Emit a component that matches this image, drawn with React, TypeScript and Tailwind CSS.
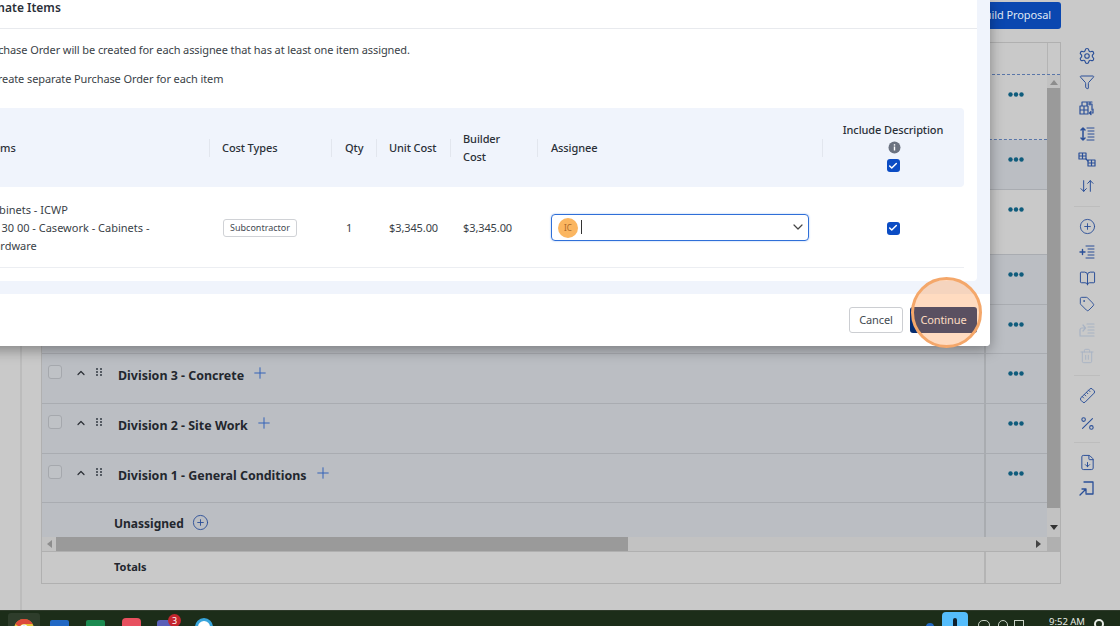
import React from "react";
import { Settings, Funnel, ArrowDownUp, CirclePlus, BookOpen, Tag, Trash2, Ruler, Percent, FileDown, ChevronDown, ChevronUp, Plus, Check } from "lucide-react";

const ink = "#2a4f98";

function Dots() {
  return (
    <svg width="16" height="5" viewBox="0 0 16 5">
      <circle cx="2.5" cy="2.5" r="2.2" fill="#0f5c7c" />
      <circle cx="8" cy="2.5" r="2.2" fill="#0f5c7c" />
      <circle cx="13.5" cy="2.5" r="2.2" fill="#0f5c7c" />
    </svg>
  );
}

function Grip() {
  return (
    <svg width="6" height="10" viewBox="0 0 6 10" fill="#555b63">
      {[1, 4, 7].map((y) => (
        <React.Fragment key={y}>
          <rect x="0" y={y - 1} width="2" height="2" />
          <rect x="4" y={y - 1} width="2" height="2" />
        </React.Fragment>
      ))}
    </svg>
  );
}

function Box() {
  return (
    <span className="flex h-[13px] w-[13px] items-center justify-center rounded-[3px] bg-[#0b4cc4]">
      <Check size={10} strokeWidth={3.5} color="white" />
    </span>
  );
}

function TableRow({ h, bg, dashed, children }: { h: number; bg: string; dashed?: boolean; children?: React.ReactNode }) {
  return (
    <div
      className={"flex border-b " + (dashed ? "border-dashed border-b-[#5a76a8]" : "border-[#a9acb1]")}
      style={{ height: h, backgroundColor: bg }}
    >
      <div className="min-w-0 flex-1">{children}</div>
      <div className="flex w-[63px] shrink-0 items-start justify-center border-l-2 border-[#a9acb0] pr-[2px] pt-[17px]">
        <Dots />
      </div>
    </div>
  );
}

function Division({ title }: { title: string }) {
  return (
    <div className="flex items-start pl-[6px] pt-[11px]">
      <span className="h-[14px] w-[14px] rounded-[3px] border border-[#a5a8ad] bg-[#bfc2c6]" />
      <ChevronUp size={12} strokeWidth={2.4} color="#2b2f36" className="ml-[13px] mt-[2px]" />
      <span className="ml-[9px] mt-[3px]"><Grip /></span>
      <span className="ml-[16px] mt-[1px] text-[12.45px] font-bold leading-[20px] text-[#23272e]">{title}</span>
      <Plus size={18} strokeWidth={1.3} color="#2f62b8" className="-mt-[1px] ml-[7px]" />
    </div>
  );
}

function SideIcon({ children }: { children: React.ReactNode }) {
  return <div className="flex h-[26px] items-center justify-center">{children}</div>;
}

function Sep({ h = 14 }: { h?: number }) {
  return (
    <div className="flex items-center justify-center" style={{ height: h }}>
      <div className="h-px w-[26px] bg-[#bdbdbd]" />
    </div>
  );
}

function Svg({ children, color = ink }: { children: React.ReactNode; color?: string }) {
  return (
    <svg width="18" height="18" viewBox="0 0 18 18" fill="none" stroke={color} strokeWidth="1.2" strokeLinecap="round" strokeLinejoin="round">
      {children}
    </svg>
  );
}

function Sidebar() {
  return (
    <div className="w-[59px] shrink-0 pr-[7px] pt-[43px]">
      <SideIcon><Settings size={18} strokeWidth={1.5} color={ink} /></SideIcon>
      <SideIcon><Funnel size={16} strokeWidth={1.5} color={ink} /></SideIcon>
      <SideIcon>
        <Svg>
          <path d="M2 7h8v8H2zM2 11h8M6 7v8M4 7V3h5v4M9 5h5v6M12 3v3M9 3h5" />
          <path d="M15 10v4h-3M13 12.5 11.5 14l1.5 1.5" />
        </Svg>
      </SideIcon>
      <SideIcon>
        <Svg>
          <path d="M5 3v12M3 5l2-2 2 2M3 13l2 2 2-2" strokeWidth="1.5" />
          <path d="M9 3h7M10 6h6M10 9h6M10 12h6M9 15h7" strokeWidth="1" />
        </Svg>
      </SideIcon>
      <SideIcon>
        <Svg>
          <path d="M1 2h7v6H1zM1 5h7M4.500 2v6M10 9h7v6h-7zM10 12h7M13.500 9v6" />
          <path d="M8 8l2 2" />
        </Svg>
      </SideIcon>
      <SideIcon><ArrowDownUp size={16} strokeWidth={1.5} color={ink} /></SideIcon>
      <Sep />
      <SideIcon><CirclePlus size={17} strokeWidth={1.3} color={ink} /></SideIcon>
      <SideIcon>
        <Svg>
          <path d="M2 9h5M4.500 6.500v5" strokeWidth="1.4" />
          <path d="M8 3h8M10 6h6M10 9h6M10 12h6M8 15h8" strokeWidth="1" />
        </Svg>
      </SideIcon>
      <SideIcon><BookOpen size={17} strokeWidth={1.4} color={ink} /></SideIcon>
      <SideIcon><Tag size={16} strokeWidth={1.4} color={ink} /></SideIcon>
      <SideIcon>
        <Svg color="#a8b3c4">
          <path d="M2 14V9a2 2 0 0 1 2-2h3M5 4l2.500 3L5 10M9 3h7M10 6h6M10 9h6M10 12h6M2 15h14" />
        </Svg>
      </SideIcon>
      <SideIcon><Trash2 size={16} strokeWidth={1.4} color="#a8b3c4" /></SideIcon>
      <Sep h={13} />
      <SideIcon><Ruler size={17} strokeWidth={1.4} color={ink} className="-scale-x-100" /></SideIcon>
      <div className="h-[2px]" />
      <SideIcon><Percent size={17} strokeWidth={1.5} color={ink} /></SideIcon>
      <Sep h={13} />
      <SideIcon><FileDown size={17} strokeWidth={1.4} color={ink} /></SideIcon>
      <SideIcon>
        <Svg>
          <path d="M6 3h9v12H8" strokeWidth="1.3" />
          <path d="M2 16l6-6M4 10h4v4" strokeWidth="1.3" />
        </Svg>
      </SideIcon>
    </div>
  );
}

function Background() {
  return (
    <div className="flex h-[610px] bg-[#c9c9c9]">
      <div className="w-[22px] shrink-0 border-r-2 border-[#bcbcbc]" />
      <div className="flex min-w-0 flex-1 flex-col pl-[19px]">
        <div className="flex h-[42px] shrink-0 justify-end pt-[2px]">
          <button className="h-[27px] whitespace-nowrap rounded-[3px] bg-[#0a47b0] px-[10px] text-[11px] tracking-[-0.1px] text-[#dfe6f3]">Build Proposal</button>
        </div>
        <div className="flex h-[542px] flex-col border border-[#b0b0b0]">
          <div className="flex h-[32px] shrink-0 border-b border-dashed border-b-[#5a76a8]">
            <div className="flex-1" />
            <div className="w-[13px] border-l border-[#b4b4b4]" />
          </div>
          <div className="flex h-[462px] shrink-0">
            <div className="min-w-0 flex-1">
              <TableRow h={65} bg="#c9c9c9" dashed />
              <TableRow h={50} bg="#bbbec3" />
              <TableRow h={65} bg="#c9c9c9" />
              <TableRow h={50} bg="#bbbec3" />
              <TableRow h={49} bg="#bbbec3"><div /></TableRow>
              <TableRow h={50} bg="#bbbec3"><Division title="Division 3 - Concrete" /></TableRow>
              <TableRow h={50} bg="#bbbec3"><Division title="Division 2 - Site Work" /></TableRow>
              <TableRow h={49} bg="#bbbec3"><Division title="Division 1 - General Conditions" /></TableRow>
              <div className="flex h-[34px] bg-[#bbbec3]">
                <div className="flex min-w-0 flex-1 items-center pl-[72px] pt-[7px]">
                  <span className="text-[12px] font-bold text-[#23272e]">Unassigned</span>
                  <CirclePlus size={17} strokeWidth={1.3} color={ink} className="-mt-[2px] ml-[8px]" />
                </div>
                <div className="w-[63px] shrink-0 border-l-2 border-[#a9acb0]" />
              </div>
            </div>
            <div className="flex w-[13px] shrink-0 flex-col items-center bg-[#c2c2c2]">
              <div className="mt-[5px] h-0 w-0 border-x-[4px] border-b-[5px] border-x-transparent border-b-[#8d8d8d]" />
              <div className="mt-[3px] h-[420px] w-full bg-[#9a9a9a]" />
              <div className="mt-[17px] h-0 w-0 border-x-[4px] border-t-[5px] border-x-transparent border-t-[#333]" />
            </div>
          </div>
          <div className="flex h-[15px] shrink-0 items-center border-b border-[#b0b0b0] bg-[#c2c2c2]">
            <div className="ml-[5px] h-0 w-0 border-y-[4px] border-r-[5px] border-y-transparent border-r-[#8d8d8d]" />
            <div className="ml-[4px] h-full w-[572px] bg-[#9a9a9a]" />
            <div className="ml-[408px] h-0 w-0 border-y-[4px] border-l-[5px] border-y-transparent border-l-[#444]" />
            <div className="ml-auto h-full w-[13px] bg-[#b0b0b0]" />
          </div>
          <div className="flex min-h-0 flex-1 bg-[#c9c9c9]">
            <div className="flex flex-1 items-center pl-[72px] text-[11px] font-bold text-[#23272e]">Totals</div>
            <div className="w-[76px] border-l-2 border-[#b4b4b4]" />
          </div>
        </div>
      </div>
      <Sidebar />
    </div>
  );
}

function Sep2() {
  return <span className="absolute left-0 top-1/2 h-[18px] w-px -translate-y-1/2 bg-[#e2e6ee]" />;
}

function Info() {
  return (
    <svg width="13" height="13" viewBox="0 0 13 13">
      <circle cx="6.5" cy="6.5" r="6" fill="#6b7280" />
      <rect x="5.800" y="5.500" width="1.400" height="4" fill="white" />
      <rect x="5.800" y="3.200" width="1.400" height="1.400" fill="white" />
    </svg>
  );
}

function Modal() {
  return (
    <div className="absolute -left-[60px] top-0 flex h-[346px] w-[1050px] flex-col overflow-hidden rounded-br-[4px] bg-[#f0f4fc] text-[11px] tracking-[-0.1px] shadow-[0_4px_14px_rgba(0,0,0,0.35)]">
      <div className="h-[281px] w-[1037px] shrink-0 rounded-br-[4px] bg-white">
        <div className="h-[29px] border-b border-[#e8eaee] pl-[19px] pt-[1px] text-[12px] font-semibold leading-[14px] tracking-normal text-[#2b3038]">Coordinate Items</div>
        <div className="flex h-[79px] flex-col pl-[31px] pt-[13px] leading-[16px] text-[#3a3f47]">
          <span>A Purchase Order will be created for each assignee that has at least one item assigned.</span>
          <span className="mt-[13px] pl-[20px]">Create separate Purchase Order for each item</span>
        </div>
        <div className="ml-[2px] mr-[13px] flex h-[79px] rounded-r-[4px] bg-[#f0f4fc] font-medium leading-[18px] text-[#2b3038]">
          <div className="flex w-[267px] items-center pl-[44px]">Items</div>
          <div className="relative flex w-[122px] items-center pl-[13px]"><Sep2 />Cost Types</div>
          <div className="relative flex w-[45px] items-center pl-[14px]"><Sep2 />Qty</div>
          <div className="relative flex w-[74px] items-center pl-[13px]"><Sep2 />Unit Cost</div>
          <div className="relative flex w-[87px] items-center pl-[13px]"><Sep2 /><span className="w-[40px]">Builder Cost</span></div>
          <div className="relative flex w-[285px] items-center pl-[14px]"><Sep2 />Assignee</div>
          <div className="relative flex w-[142px] flex-col items-center justify-center"><Sep2 />
            <span>Include Description</span>
            <span className="flex h-[18px] items-center pl-[3px]"><Info /></span>
            <span className="flex h-[18px] items-center"><Box /></span>
          </div>
        </div>
        <div className="ml-[2px] mr-[13px] flex h-[81px] border-b border-[#eceef2] pt-[2px] leading-[18px] text-[#3a3f47]">
          <div className="flex w-[267px] flex-col justify-center pl-[44px] pr-[36px] tracking-normal">
            <span>Cabinets - ICWP</span>
            <span>06 30 00 - Casework - Cabinets - Hardware</span>
          </div>
          <div className="flex w-[122px] items-center pl-[14px]">
            <span className="flex h-[18px] w-[74px] items-center justify-center rounded-[3px] border border-[#d0d2d6] text-[9px] tracking-normal text-[#444a52]">Subcontractor</span>
          </div>
          <div className="flex w-[45px] items-center pl-[15px]">1</div>
          <div className="flex w-[74px] items-center pl-[13px]">$3,345.00</div>
          <div className="flex w-[87px] items-center pl-[13px]">$3,345.00</div>
          <div className="flex w-[285px] items-center pl-[14px]">
            <div className="-mt-[2px] flex h-[27px] w-[258px] items-center rounded-[4px] border-[1.5px] border-[#2f6fd8] pl-[6px] pr-[2px] shadow-[0_0_2px_#9dbdf0]">
              <span className="mt-[2px] flex h-[20px] w-[20px] items-center justify-center rounded-full bg-[#fbb660] text-[8px] tracking-normal text-[#a9682a]">IC</span>
              <span className="ml-[3px] h-[14px] w-px bg-[#333]" />
              <ChevronDown size={16} strokeWidth={1.8} color="#444" className="ml-auto" />
            </div>
          </div>
          <div className="flex w-[142px] items-center justify-center"><Box /></div>
        </div>
      </div>
      <div className="h-[13px] shrink-0" />
      <div className="flex h-[52px] shrink-0 items-start justify-end gap-[7px] bg-white pr-[13px] pt-[13px]">
        <button className="h-[26px] w-[54px] rounded-[3px] border border-[#ccced2] text-[#444a52]">Cancel</button>
        <button className="h-[26px] w-[67px] rounded-[3px] bg-[#052c70] text-white">Continue</button>
      </div>
    </div>
  );
}

function Taskbar() {
  return (
    <div className="relative flex h-[16px] items-start overflow-hidden border-t border-[#2e3a2a] bg-[#1c2d19]">
      <div className="ml-[8px] mt-[2px] flex h-[20px] w-[32px] justify-center rounded-[3px] bg-[#2e3d2b] pt-[6px]">
        <svg width="20" height="20" viewBox="0 0 20 20" className="shrink-0">
          <circle cx="10" cy="10" r="10" fill="#e8c23a" />
          <path d="M1.300 5A10 10 0 0 1 18.700 5H10A5 5 0 0 0 5.500 8Z" fill="#dd4a3a" />
          <circle cx="10" cy="10" r="4.500" fill="white" />
          <circle cx="10" cy="10" r="3.300" fill="#3b82f6" />
        </svg>
      </div>
      <span className="ml-[10px] mt-[9px] h-[16px] w-[19px] rounded-[2px] bg-[#2168c4]" />
      <span className="ml-[17px] mt-[9px] h-[16px] w-[19px] rounded-[2px] bg-[#1b8a50]" />
      <span className="ml-[17px] mt-[7px] h-[20px] w-[19px] rounded-[4px] bg-[#e8505f]" />
      <span className="ml-[16px] mt-[9px] h-[16px] w-[18px] rounded-[3px] bg-[#5a5fb8]" />
      <span className="absolute left-[168px] top-[3px] flex h-[13px] w-[13px] items-center justify-center rounded-full bg-[#c4262e] text-[9px] leading-none text-white">3</span>
      <span className="ml-[20px] mt-[7px] h-[18px] w-[18px] rounded-full border-[3px] border-[#38a5dc] bg-white" />
      <span className="ml-auto mt-[12px] h-[8px] w-[8px] rounded-full bg-[#2168c4]" />
      <span className="ml-[8px] mt-[1px] flex h-[16px] w-[26px] justify-center rounded-t-[4px] bg-[#55bdfb] pt-[6px]">
        <span className="h-[10px] w-[4px] rounded-full bg-[#10202c]" />
      </span>
      <span className="ml-[10px] mt-[9px] h-[10px] w-[12px] rounded-full border border-[#c9d2c6]" />
      <span className="ml-[8px] mt-[9px] h-[10px] w-[10px] rounded-t-full border border-[#c9d2c6]" />
      <span className="ml-[6px] mt-[9px] h-[10px] w-[10px] border border-[#c9d2c6]" />
      <span className="ml-[25px] whitespace-nowrap pt-[4px] text-[9.5px] leading-[13px] text-[#e8ece6]">9:52 AM</span>
      <span className="ml-[9px] mr-[16px] mt-[8px] h-[10px] w-[10px] rounded-full border-2 border-[#e8ece6]" />
    </div>
  );
}

export default function App() {
  return (
    <div className="relative h-[626px] w-[1120px] overflow-hidden font-['Noto_Sans',sans-serif]">
      <Background />
      <Taskbar />
      <Modal />
      <div className="absolute left-[911px] top-[277px] h-[71px] w-[71px] rounded-full border-[3px] border-[#f4a76a] bg-[rgba(255,150,70,0.34)]" />
    </div>
  );
}
